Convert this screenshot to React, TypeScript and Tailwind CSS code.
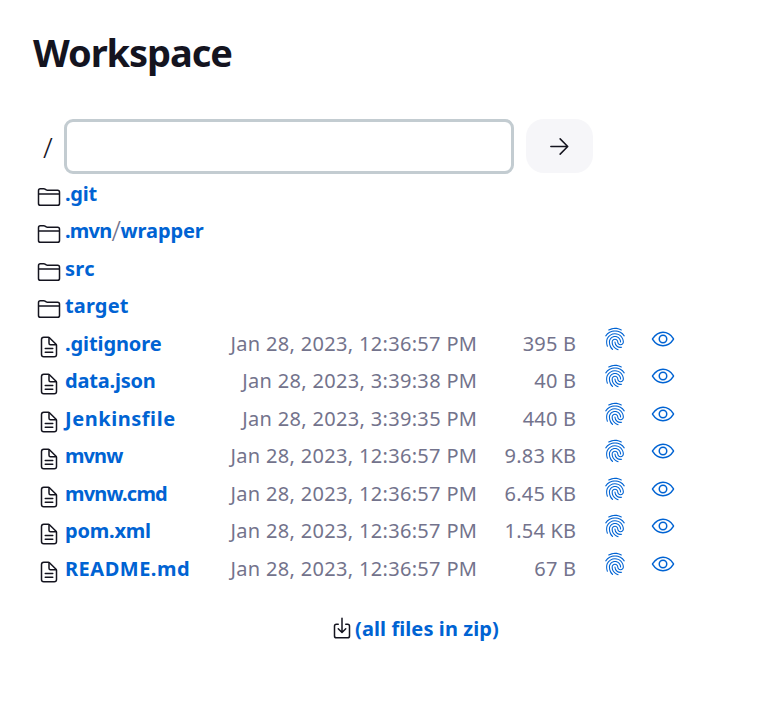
import React from 'react';
import {
  IoDocumentTextOutline,
  IoDownloadOutline,
  IoEyeOutline,
  IoFingerPrintOutline,
  IoFolderOutline,
} from 'react-icons/io5';

type Label = { text: string; spacing: string };

const folders: Label[][] = [
  [{ text: '.git', spacing: 'tracking-[-0.25px]' }],
  [
    { text: '.mvn', spacing: 'tracking-[-0.75px]' },
    { text: 'wrapper', spacing: 'tracking-[-0.1px]' },
  ],
  [{ text: 'src', spacing: 'tracking-[0.3px]' }],
  [{ text: 'target', spacing: 'tracking-[0.15px]' }],
];

const files = [
  { name: '.gitignore', spacing: 'tracking-[-0.1px]', date: 'Jan 28, 2023, 12:36:57 PM', size: '395 B' },
  { name: 'data.json', spacing: 'tracking-[-0.2px]', date: 'Jan 28, 2023, 3:39:38 PM', size: '40 B' },
  { name: 'Jenkinsfile', spacing: 'tracking-[0.55px]', date: 'Jan 28, 2023, 3:39:35 PM', size: '440 B' },
  { name: 'mvnw', spacing: 'tracking-[-0.9px]', date: 'Jan 28, 2023, 12:36:57 PM', size: '9.83 KB' },
  { name: 'mvnw.cmd', spacing: 'tracking-[-0.8px]', date: 'Jan 28, 2023, 12:36:57 PM', size: '6.45 KB' },
  { name: 'pom.xml', spacing: 'tracking-[-0.2px]', date: 'Jan 28, 2023, 12:36:57 PM', size: '1.54 KB' },
  { name: 'README.md', spacing: 'tracking-[0.5px]', date: 'Jan 28, 2023, 12:36:57 PM', size: '67 B' },
];

const link = 'font-bold text-[#0063d3]';

export default function App() {
  return (
    <main className="h-[712px] w-[779px] overflow-hidden bg-white font-['Noto_Sans',sans-serif] text-[20px] leading-[35.5px] text-[#14141f]">
      <h1 className="flex h-[119px] items-start pt-[28px] pl-[33px] text-[38px] leading-[48px] font-bold tracking-[-1.05px]">
        Workspace
      </h1>

      <form className="flex h-[56.3px] items-start pl-[43px]">
        <span className="w-[21px] pt-[11px] text-[28px] font-light">/</span>
        <input
          type="text"
          aria-label="Path"
          className="h-[55px] w-[450px] rounded-[9px] border-[3px] border-[#c3ccd1] bg-white outline-none"
        />
        <button
          type="button"
          aria-label="Go"
          className="ml-3 flex h-[54px] w-[67px] items-center justify-center rounded-[18px] bg-[#f6f6f9]"
        >
          <svg viewBox="0 0 512 512" className="h-[27px] w-[27px]" fill="none" stroke="currentColor" strokeWidth="29" strokeLinecap="round" strokeLinejoin="round">
            <path d="M268 112l144 144-144 144M404 256H92" />
          </svg>
        </button>
      </form>

      <div className="pl-[37px]">
        {folders.map((path) => (
          <div key={path[0].text} className="flex h-[37.5px] pt-[0.4px]">
            <IoFolderOutline className="mt-[9.1px] mr-1 h-6 w-6 shrink-0" />
            {path.map((part, i) => (
              <React.Fragment key={part.text}>
                {i > 0 && <span className="w-[9px] text-[27px] font-light text-[#73738c]">/</span>}
                <a className={`${link} ${part.spacing}`}>{part.text}</a>
              </React.Fragment>
            ))}
          </div>
        ))}
        {files.map((file) => (
          <div key={file.name} className="flex h-[37.5px] pt-[0.4px] text-[#73738c]">
            <IoDocumentTextOutline className="mt-[9.1px] mr-1 h-6 w-6 shrink-0 text-[#14141f]" />
            <a className={`w-[145px] whitespace-nowrap ${link} ${file.spacing}`}>{file.name}</a>
            <span className="w-[267.3px] text-right tracking-[0.32px] whitespace-nowrap">{file.date}</span>
            <span className="w-[99px] text-right tracking-[0.22px] whitespace-nowrap">{file.size}</span>
            <IoFingerPrintOutline className="mt-[1.1px] ml-[26.7px] h-6 w-6 shrink-0 text-[#0063d3]" />
            <IoEyeOutline className="mt-[1.1px] ml-6 h-6 w-6 shrink-0 text-[#0063d3]" />
          </div>
        ))}
      </div>

      <div className="mt-[22.2px] flex h-[37.5px] pl-[330px]">
        <IoDownloadOutline className="mt-[6px] h-6 w-6 shrink-0" />
        <a className={`pt-px pl-px tracking-[0.1px] ${link}`}>(all files in zip)</a>
      </div>
    </main>
  );
}
